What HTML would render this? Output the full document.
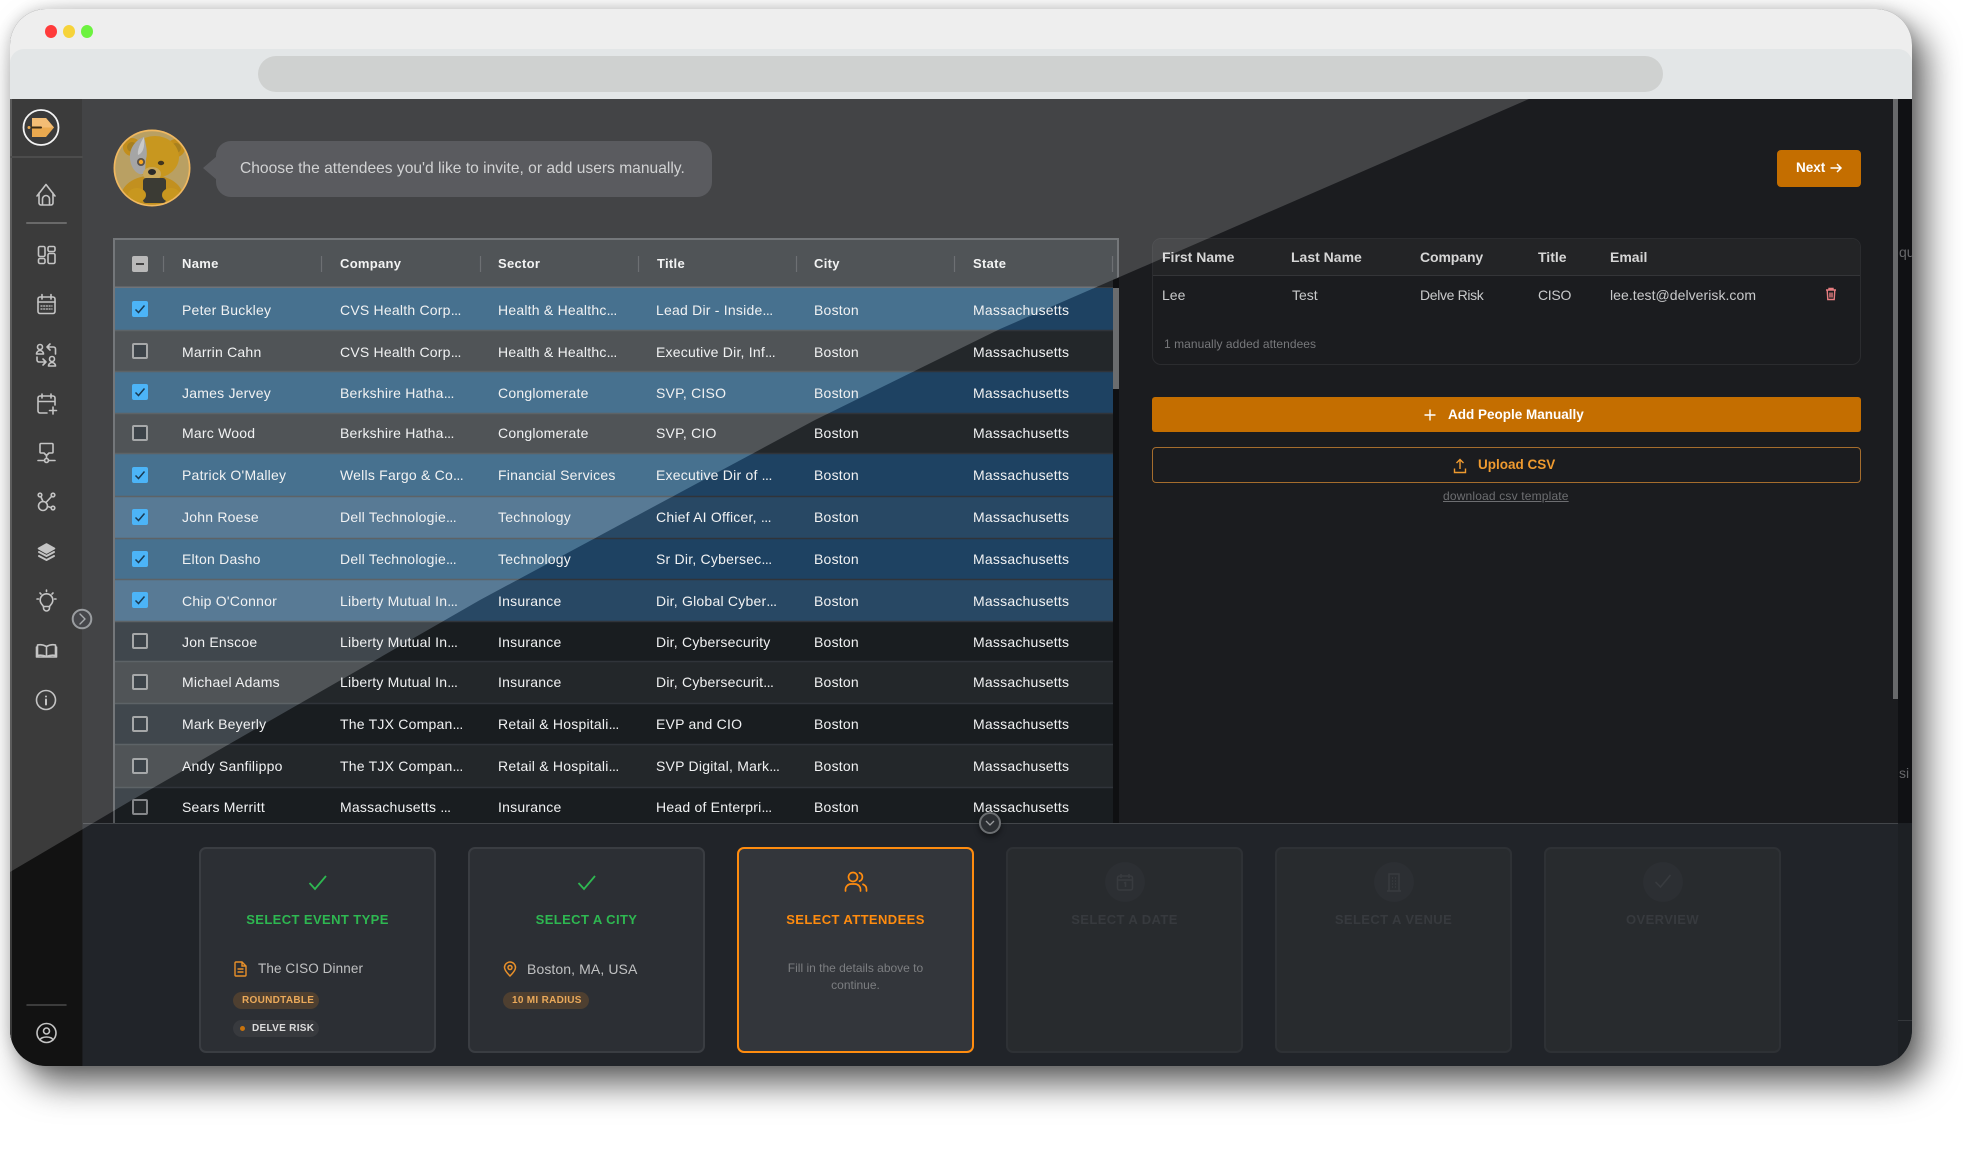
<!DOCTYPE html>
<html lang="en"><head><meta charset="utf-8"><title>Select Attendees</title>
<style>
html,body{margin:0;padding:0;background:#fff;width:1963px;height:1150px;overflow:hidden;font-family:"Liberation Sans",sans-serif}
*{box-sizing:border-box}
#win{position:absolute;left:10px;top:9px;width:1902px;height:1057px;border-radius:36px 36px 36px 36px;box-shadow:14px 18px 34px rgba(0,0,0,.62),0 0 14px rgba(0,0,0,.16)}
#clip{position:absolute;left:0;top:0;width:1902px;height:1057px;border-radius:36px;overflow:hidden;background:#1b1c1f}
#p{position:absolute;left:-10px;top:-9px;width:1963px;height:1150px}
.a{position:absolute}
svg.a{overflow:visible}
.r{position:absolute;left:115px;width:998px;color:#f1f2f3;font-size:14px;letter-spacing:.22px}
.r span{position:absolute;top:1px;white-space:nowrap}
.r b{font-weight:400;letter-spacing:-.5px}
.r .c1{left:67px}.r .c2{left:225px}.r .c3{left:383px}.r .c4{left:541px}.r .c5{left:699px}.r .c6{left:858px}
.cb{position:absolute;left:17px;width:16px;height:16px;border-radius:2px}
.cb.on{background:#4cb4f7}
.cb.off{border:2px solid #a6a8a9;background:#3c4349}
.cb svg{position:absolute;left:0;top:0}
.r.hd span{top:0}
.hd{font-weight:700;font-size:13px;letter-spacing:.3px;color:#f2f3f3}
.card{position:absolute;top:847px;height:206px;width:237px;border:2px solid #3a3d42;border-radius:7px;background:#2c2f34}
.card.dis{background:#282b2e;border-color:#2e3135}
.card.act{background:#33363b;border-color:#ff8c0f}
.t{position:absolute;left:0;width:233px;top:62px;text-align:center;font-weight:700;font-size:13px;line-height:18px;letter-spacing:.4px;white-space:nowrap}
.pill{position:absolute;height:17px;width:86px;border-radius:9px;font-size:10px;font-weight:700;line-height:17px;letter-spacing:.3px;white-space:nowrap}
.rt{position:absolute;font-size:14px;color:#c9cacb;white-space:nowrap;line-height:18px}
.rh{position:absolute;font-size:14px;font-weight:700;color:#d6d6d6;white-space:nowrap;line-height:18px}
</style></head><body>
<div id="win"><div id="clip"><div id="p">

<!-- chrome -->
<div class="a" style="left:0;top:0;width:1963px;height:70px;background:#eeeeee"></div>
<div class="a" style="left:10px;top:49px;width:1902px;height:50px;background:#e3e6e7;border-radius:14px 14px 0 0"></div>
<div class="a" style="left:258px;top:56px;width:1405px;height:36px;border-radius:18px;background:#cfd1d0"></div>
<div class="a" style="left:45px;top:25px;width:12px;height:13px;border-radius:50%;background:#ff3b3b"></div>
<div class="a" style="left:63px;top:25px;width:12px;height:13px;border-radius:50%;background:#f6d33a"></div>
<div class="a" style="left:81px;top:25px;width:12px;height:13px;border-radius:50%;background:#6cf23f"></div>

<!-- base -->
<div class="a" style="left:10px;top:99px;width:72px;height:967px;background:#121212"></div>
<div class="a" style="left:10px;top:99px;width:2px;height:967px;background:#3a3a3a"></div>
<div class="a" style="left:1898px;top:99px;width:14px;height:724px;background:#101114"></div>
<div class="a" style="left:1893px;top:99px;width:5px;height:600px;background:#68696b"></div>
<div class="a" style="left:1899px;top:244px;font-size:14px;color:#66676a;width:13px;overflow:hidden;line-height:16px">qu</div>
<div class="a" style="left:1899px;top:765px;font-size:14px;color:#66676a;width:13px;overflow:hidden;line-height:16px">si</div>

<!-- right panel card -->
<div class="a" style="left:1152px;top:238px;width:709px;height:127px;border:1px solid #2b2c2f;border-radius:9px;background:#1b1c1f;overflow:hidden">
  <div class="a" style="left:0;top:0;width:709px;height:37px;background:#232426;border-bottom:1px solid #343538"></div>
</div>
<div class="rh" style="left:1162px;top:248px">First Name</div>
<div class="rh" style="left:1291px;top:248px">Last Name</div>
<div class="rh" style="left:1420px;top:248px;letter-spacing:-.1px">Company</div>
<div class="rh" style="left:1538px;top:248px">Title</div>
<div class="rh" style="left:1610px;top:248px">Email</div>
<div class="rt" style="left:1162px;top:286px">Lee</div>
<div class="rt" style="left:1292px;top:286px">Test</div>
<div class="rt" style="left:1420px;top:286px;letter-spacing:-.35px">Delve Risk</div>
<div class="rt" style="left:1538px;top:286px;letter-spacing:-.3px">CISO</div>
<div class="rt" style="left:1610px;top:286px;letter-spacing:.05px">lee.test@delverisk.com</div>
<svg class="a" style="left:1824px;top:287px" width="14" height="14" viewBox="0 0 14 14" fill="none" stroke="#e67d80" stroke-width="1.4"><path d="M2 3h10M5 3V1.5h4V3M3.2 3l.6 9.5h6.4l.6-9.5M6 5.5v5M8 5.5v5"/></svg>
<div class="a" style="left:1164px;top:336px;font-size:12px;color:#77787b;line-height:16px;letter-spacing:.05px">1 manually added attendees</div>

<div class="a" style="left:1152px;top:397px;width:709px;height:35px;background:#c46e00;border-radius:3px;color:#fff;font-size:13.5px;font-weight:700;line-height:36px;text-align:center"><span style="position:absolute;left:296px;top:0">Add People Manually</span></div>
<svg class="a" style="left:1424px;top:409px" width="12" height="12" viewBox="0 0 12 12" stroke="#fff" stroke-width="1.4"><path d="M6 .5v11M.5 6h11"/></svg>
<div class="a" style="left:1152px;top:447px;width:709px;height:36px;border:1.5px solid #a56d2d;border-radius:4px;color:#ef9a2f;font-size:13.5px;font-weight:700;line-height:34px"><span style="position:absolute;left:325px;top:0">Upload CSV</span></div>
<svg class="a" style="left:1453px;top:458px" width="14" height="16" viewBox="0 0 14 16" fill="none" stroke="#ef9a2f" stroke-width="1.4"><path d="M7 11V2M3.5 5 7 1.5 10.500 5M1.500 10.500V14.500H12.500V10.500"/></svg>
<div class="a" style="left:1443px;top:488px;font-size:12px;color:#6d6e71;text-decoration:underline;line-height:16px;letter-spacing:.17px;white-space:nowrap">download csv template</div>

<!-- bottom panel (base) -->
<div class="a" style="left:83px;top:823px;width:1815px;height:243px;background:#212429;border-top:1px solid #43464a"></div>
<div class="a" style="left:1898px;top:823px;width:14px;height:243px;background:#1d2024"></div>
<div class="a" style="left:1898px;top:1020px;width:14px;height:1px;background:#34373b"></div>

<!-- glare -->
<svg class="a" style="left:0;top:0" width="1963" height="1150"><polygon points="10,99 1529,99 1000,329 815,420 480,600 132,800 83,829 10,872" fill="#fff" fill-opacity=".175"/></svg>

<!-- table backgrounds -->
<svg class="a" style="left:0;top:0" width="1963" height="1150">
<defs><clipPath id="g"><polygon points="0,0 1560,0 1529,99 1000,329 815,420 480,600 132,800 10,872 0,872"/></clipPath></defs>
<g>
<rect x="113" y="238" width="1006" height="585" fill="#0f1012"/>
<rect x="113" y="238" width="1006" height="2" fill="#4c4f52"/>
<rect x="113" y="238" width="2" height="585" fill="#54575a"/>
<rect x="115" y="240" width="998" height="48" fill="#26292c"/>
<rect x="115" y="287" width="998" height="1" fill="#3a3d40"/>
<rect x="115" y="288" width="998" height="42" fill="#1e4262"/>
<rect x="115" y="330" width="998" height="41" fill="#23272a"/>
<rect x="115" y="371" width="998" height="42" fill="#1e4262"/>
<rect x="115" y="413" width="998" height="40" fill="#23272a"/>
<rect x="115" y="453" width="998" height="43" fill="#1e4262"/>
<rect x="115" y="496" width="998" height="42" fill="#284864"/>
<rect x="115" y="538" width="998" height="41" fill="#1e4262"/>
<rect x="115" y="579" width="998" height="42" fill="#284864"/>
<rect x="115" y="621" width="998" height="40" fill="#191d20"/>
<rect x="115" y="661" width="998" height="42" fill="#23272a"/>
<rect x="115" y="703" width="998" height="41" fill="#191d20"/>
<rect x="115" y="744" width="998" height="43" fill="#23272a"/>
<rect x="115" y="787" width="998" height="36" fill="#191d20"/>
<path d="M115 330.500H1113M115 371.500H1113M115 413.500H1113M115 453.500H1113M115 496.500H1113M115 538.500H1113M115 579.500H1113M115 621.500H1113M115 661.500H1113M115 703.500H1113M115 744.500H1113M115 787.500H1113" stroke="#30343a" stroke-width="1.500"/>
<rect x="1113" y="288" width="6" height="101" fill="#6a6c6e"/>
</g>
<g clip-path="url(#g)">
<rect x="113" y="238" width="1006" height="2.500" fill="#74777a"/>
<rect x="113" y="238" width="2.500" height="585" fill="#74777a"/>
<rect x="1116.500" y="238" width="2.500" height="50" fill="#74777a"/>
<rect x="115" y="240" width="1002" height="48" fill="#505457"/>
<rect x="115" y="286.500" width="1002" height="2" fill="#70747a"/>
<rect x="115" y="288" width="998" height="42" fill="#47718f"/>
<rect x="115" y="330" width="998" height="41" fill="#505457"/>
<rect x="115" y="371" width="998" height="42" fill="#47718f"/>
<rect x="115" y="413" width="998" height="40" fill="#505457"/>
<rect x="115" y="453" width="998" height="43" fill="#47718f"/>
<rect x="115" y="496" width="998" height="42" fill="#587a95"/>
<rect x="115" y="538" width="998" height="41" fill="#47718f"/>
<rect x="115" y="579" width="998" height="42" fill="#587a95"/>
<rect x="115" y="621" width="998" height="40" fill="#40474d"/>
<rect x="115" y="661" width="998" height="42" fill="#505457"/>
<rect x="115" y="703" width="998" height="41" fill="#40474d"/>
<rect x="115" y="744" width="998" height="43" fill="#505457"/>
<rect x="115" y="787" width="998" height="36" fill="#40474d"/>
<path d="M115 330.500H1113M115 371.500H1113M115 413.500H1113M115 453.500H1113M115 496.500H1113M115 538.500H1113M115 579.500H1113M115 621.500H1113M115 661.500H1113M115 703.500H1113M115 744.500H1113M115 787.500H1113" stroke="#5d6367" stroke-width="1.500"/>
</g>
<path d="M163.500 256V272M321.500 256V272M480.500 256V272M638.500 256V272M796.500 256V272M954.500 256V272M1112.500 256V272" stroke="#6d7073" stroke-width="1.200"/>
</svg>

<!-- table text -->
<div class="r hd" style="top:240px;height:48px;line-height:48px">
<i class="cb" style="top:16px;background:#b9b9b9"><svg width="16" height="16"><path d="M4 8h8" stroke="#444" stroke-width="2"/></svg></i>
<span class="c1">Name</span><span class="c2">Company</span><span class="c3">Sector</span><span class="c4" style="left:542px">Title</span><span class="c5">City</span><span class="c6">State</span></div>

<div class="r" style="top:288px;height:42px;line-height:42px"><i class="cb on" style="top:13px"><svg width="16" height="16" fill="none" stroke="#1a3a52" stroke-width="1.500"><path d="M3.500 8.500 6.500 11.500 12.500 4.500"/></svg></i><span class="c1">Peter Buckley</span><span class="c2">CVS Health Corp<b>...</b></span><span class="c3">Health &amp; Healthc<b>...</b></span><span class="c4">Lead Dir - Inside<b>...</b></span><span class="c5">Boston</span><span class="c6">Massachusetts</span></div>
<div class="r" style="top:330px;height:41px;line-height:43px"><i class="cb off" style="top:13px"></i><span class="c1">Marrin Cahn</span><span class="c2">CVS Health Corp<b>...</b></span><span class="c3">Health &amp; Healthc<b>...</b></span><span class="c4">Executive Dir, Inf<b>...</b></span><span class="c5">Boston</span><span class="c6">Massachusetts</span></div>
<div class="r" style="top:371px;height:42px;line-height:42px"><i class="cb on" style="top:13px"><svg width="16" height="16" fill="none" stroke="#1a3a52" stroke-width="1.500"><path d="M3.500 8.500 6.500 11.500 12.500 4.500"/></svg></i><span class="c1">James Jervey</span><span class="c2">Berkshire Hatha<b>...</b></span><span class="c3">Conglomerate</span><span class="c4">SVP, CISO</span><span class="c5">Boston</span><span class="c6">Massachusetts</span></div>
<div class="r" style="top:413px;height:40px;line-height:38px"><i class="cb off" style="top:12px"></i><span class="c1">Marc Wood</span><span class="c2">Berkshire Hatha<b>...</b></span><span class="c3">Conglomerate</span><span class="c4">SVP, CIO</span><span class="c5">Boston</span><span class="c6">Massachusetts</span></div>
<div class="r" style="top:453px;height:43px;line-height:43px"><i class="cb on" style="top:14px"><svg width="16" height="16" fill="none" stroke="#1a3a52" stroke-width="1.500"><path d="M3.500 8.500 6.500 11.500 12.500 4.500"/></svg></i><span class="c1">Patrick O'Malley</span><span class="c2">Wells Fargo &amp; Co<b>...</b></span><span class="c3">Financial Services</span><span class="c4">Executive Dir of <b>...</b></span><span class="c5">Boston</span><span class="c6">Massachusetts</span></div>
<div class="r" style="top:496px;height:42px;line-height:40px"><i class="cb on" style="top:13px"><svg width="16" height="16" fill="none" stroke="#1a3a52" stroke-width="1.500"><path d="M3.500 8.500 6.500 11.500 12.500 4.500"/></svg></i><span class="c1">John Roese</span><span class="c2">Dell Technologie<b>...</b></span><span class="c3">Technology</span><span class="c4">Chief AI Officer, <b>...</b></span><span class="c5">Boston</span><span class="c6">Massachusetts</span></div>
<div class="r" style="top:538px;height:41px;line-height:41px"><i class="cb on" style="top:13px"><svg width="16" height="16" fill="none" stroke="#1a3a52" stroke-width="1.500"><path d="M3.500 8.500 6.500 11.500 12.500 4.500"/></svg></i><span class="c1">Elton Dasho</span><span class="c2">Dell Technologie<b>...</b></span><span class="c3">Technology</span><span class="c4">Sr Dir, Cybersec<b>...</b></span><span class="c5">Boston</span><span class="c6">Massachusetts</span></div>
<div class="r" style="top:579px;height:42px;line-height:42px"><i class="cb on" style="top:13px"><svg width="16" height="16" fill="none" stroke="#1a3a52" stroke-width="1.500"><path d="M3.500 8.500 6.500 11.500 12.500 4.500"/></svg></i><span class="c1">Chip O'Connor</span><span class="c2">Liberty Mutual In<b>...</b></span><span class="c3">Insurance</span><span class="c4">Dir, Global Cyber<b>...</b></span><span class="c5">Boston</span><span class="c6">Massachusetts</span></div>
<div class="r" style="top:621px;height:40px;line-height:40px"><i class="cb off" style="top:12px"></i><span class="c1">Jon Enscoe</span><span class="c2">Liberty Mutual In<b>...</b></span><span class="c3">Insurance</span><span class="c4">Dir, Cybersecurity</span><span class="c5">Boston</span><span class="c6">Massachusetts</span></div>
<div class="r" style="top:661px;height:42px;line-height:40px"><i class="cb off" style="top:13px"></i><span class="c1">Michael Adams</span><span class="c2">Liberty Mutual In<b>...</b></span><span class="c3">Insurance</span><span class="c4">Dir, Cybersecurit<b>...</b></span><span class="c5">Boston</span><span class="c6">Massachusetts</span></div>
<div class="r" style="top:703px;height:41px;line-height:41px"><i class="cb off" style="top:13px"></i><span class="c1">Mark Beyerly</span><span class="c2">The TJX Compan<b>...</b></span><span class="c3">Retail &amp; Hospitali<b>...</b></span><span class="c4">EVP and CIO</span><span class="c5">Boston</span><span class="c6">Massachusetts</span></div>
<div class="r" style="top:744px;height:43px;line-height:43px"><i class="cb off" style="top:14px"></i><span class="c1">Andy Sanfilippo</span><span class="c2">The TJX Compan<b>...</b></span><span class="c3">Retail &amp; Hospitali<b>...</b></span><span class="c4">SVP Digital, Mark<b>...</b></span><span class="c5">Boston</span><span class="c6">Massachusetts</span></div>
<div class="r" style="top:787px;height:36px;line-height:38px;overflow:hidden"><i class="cb off" style="top:12px;background:#24282b;border-color:#85878a"></i><span class="c1">Sears Merritt</span><span class="c2">Massachusetts <b>...</b></span><span class="c3">Insurance</span><span class="c4">Head of Enterpri<b>...</b></span><span class="c5">Boston</span><span class="c6">Massachusetts</span></div>

<!-- header: avatar + bubble -->
<svg class="a" style="left:113px;top:129px" width="78" height="78" viewBox="0 0 78 78">
<defs><clipPath id="av"><circle cx="39" cy="39" r="36.800"/></clipPath></defs>
<circle cx="39" cy="39" r="38.500" fill="#f0b860"/>
<g clip-path="url(#av)">
<rect width="78" height="78" fill="#b9a063"/>
<path d="M6 78 C6 58 16 48 40 46 C62 48 72 58 72 78Z" fill="#c2901f"/>
<circle cx="19" cy="18" r="9" fill="#c28e1c"/><circle cx="19" cy="18" r="5" fill="#a8801f"/>
<circle cx="63" cy="19" r="9" fill="#c28e1c"/><circle cx="63" cy="19" r="5" fill="#a8801f"/>
<ellipse cx="42" cy="28" rx="24" ry="21" fill="#c8971f"/>
<path d="M31 8 C22 11 16 20 17 30 C18 39 24 47 31 45 C33 43 32 36 33 30 C35 24 33 16 31 8Z" fill="#a5a5a5"/>
<path d="M31 8 C27 14 24 22 25 26 C30 24 32 18 31 8Z" fill="#c9c9c9"/>
<circle cx="28" cy="33" r="4" fill="#5a5148"/><circle cx="28" cy="33" r="2.200" fill="#f5a623"/>
<ellipse cx="48" cy="34" rx="3.200" ry="2.200" fill="#40351f"/>
<ellipse cx="39" cy="45" rx="9" ry="7" fill="#c9a85a"/><ellipse cx="39" cy="43" rx="4" ry="3" fill="#2a2a2a"/>
<rect x="30" y="49" width="23" height="25" rx="3" fill="#3b3b34"/>
<ellipse cx="24" cy="66" rx="9" ry="7" fill="#c8971f"/><ellipse cx="58" cy="66" rx="9" ry="7" fill="#c8971f"/>
</g>
</svg>
<svg class="a" style="left:203px;top:141px" width="509" height="56"><path d="M0 27 14 15V39Z" fill="#5a5b5f"/><rect x="13" y="0" width="496" height="56" rx="15" fill="#5a5b5f"/></svg>
<div class="a" style="left:240px;top:159px;font-size:15.6px;line-height:20px;color:#d1d2d3;white-space:nowrap">Choose the attendees you'd like to invite, or add users manually.</div>

<div class="a" style="left:1777px;top:150px;width:84px;height:37px;background:#c46e00;border-radius:4px"></div>
<div class="a" style="left:1796px;top:159px;color:#fff;font-size:13.5px;font-weight:700;line-height:18px;white-space:nowrap">Next</div>
<svg class="a" style="left:1830px;top:163px" width="12" height="10" fill="none" stroke="#fff" stroke-width="1.500"><path d="M.5 5H11M7 1 11 5 7 9"/></svg>

<!-- sidebar icons -->
<svg class="a" style="left:0;top:0" width="120" height="1150" fill="none" stroke="#c4c4c4" stroke-width="1.600" stroke-linecap="round" stroke-linejoin="round">
<!-- logo -->
<circle cx="41" cy="127.500" r="17.500" stroke="#f4f4f4" stroke-width="1.800"/>
<path d="M32 118H46L54 127.500 46 137H32Z" fill="#eaa94f" stroke="none"/>
<path d="M32 118H46L54 127.500 H32Z" fill="#f3bd75" stroke="none"/>
<path d="M29 127.500H41" stroke="#3a2a14" stroke-width="2"/><circle cx="29" cy="127.500" r="1.500" fill="#eaa94f" stroke="none"/>
<path d="M11 157H82" stroke="#4c4c4c" stroke-width="2"/>
<!-- home -->
<path d="M37 196 46 184.500 55 196M39 193V203A2 2 0 0 0 41 205H51A2 2 0 0 0 53 203V193M42.500 204.500V199A3.500 3.500 0 0 1 49.500 199V204.500"/>
<path d="M27 223H66" stroke="#696969" stroke-width="2"/>
<!-- dashboard -->
<rect x="38.500" y="246.500" width="6.500" height="10" rx="1.500"/><rect x="48" y="246.500" width="7" height="5" rx="1.500"/><rect x="38.500" y="258.500" width="6.500" height="5" rx="1.500"/><rect x="48" y="253.500" width="7" height="10" rx="1.500"/>
<!-- calendar -->
<rect x="38" y="297" width="17" height="16.500" rx="2"/><path d="M42 294.500V299M51 294.500V299M38 302H55"/><path d="M41 306H52M41 309H52" stroke-dasharray="1 1.700" stroke-width="1.300"/>
<!-- swap -->
<circle cx="40" cy="347" r="2.500"/><path d="M36.500 354A3.500 3.500 0 0 1 43.500 354Z"/><path d="M55.500 354V349A2 2 0 0 0 53.500 347H47M50 344 47 347 50 350"/>
<path d="M37 357V360A2 2 0 0 0 39 362H46M43 359 46 362 43 365"/><circle cx="52" cy="359" r="2.500"/><path d="M48.500 366A3.500 3.500 0 0 1 55.500 366Z"/>
<!-- calendar plus -->
<path d="M47 413H40A2 2 0 0 1 38 411V398A2 2 0 0 1 40 396H53A2 2 0 0 1 55 398V405M42 394V398M51 394V398M38 401.500H55M53 407V414M49.500 410.500H56.500"/>
<!-- network -->
<path d="M41 443.500H52A1 1 0 0 1 53 444.500V452A1 1 0 0 1 52 453H49L46.500 455.500 44 453H41A1 1 0 0 1 40 452V444.500A1 1 0 0 1 41 443.500ZM46.500 455.500V458M38 460.500H44.500M48.500 460.500H55"/><circle cx="46.500" cy="460.500" r="2"/>
<!-- graph -->
<circle cx="43" cy="506" r="4.500"/><circle cx="40" cy="495" r="1.800"/><circle cx="53" cy="495" r="1.800"/><circle cx="53" cy="508" r="1.800"/><path d="M41 497 43 501.500M51.500 496.500 46 502.500M47.500 506.500 51 507.500"/>
<!-- layers -->
<path d="M46.500 544 54.500 548.500 46.500 553 38.500 548.500Z" fill="#c4c4c4"/><path d="M39 552 46.500 556 54 552M39 556 46.500 560 54 556" stroke-width="2"/>
<!-- bulb -->
<path d="M42 604.500A6.300 6.300 0 1 1 51 604.500L49.500 606.500H43.500ZM43.500 606.500V608A3 3 0 0 0 49.500 608V606.500"/><path d="M46.500 590V591.500M37 599H38.500M54.500 599H56M40 593 41 594M53 593 52 594"/>
<!-- book -->
<path d="M46.500 646.500C43 644.500 39.500 644.500 37.500 645V655.500C40 655 43 655 46.500 656.500 50 655 53 655 55.500 655.500V645C53.500 644.500 50 644.500 46.500 646.500ZM46.500 646.500V656M36.500 647V657H56.500V647"/>
<!-- info -->
<circle cx="46" cy="700" r="9.500"/><path d="M46 699.500V704.500" stroke-width="2"/><circle cx="46" cy="696.500" r="1" fill="#c4c4c4" stroke="none"/>
<!-- expand -->
<circle cx="82" cy="619" r="9.300" fill="#46474b" stroke="#9a9da0" stroke-width="2"/><path d="M80 614 85 619 80 624" stroke="#a8abad" stroke-width="1.400"/>
<!-- bottom -->
<path d="M27 1005H66" stroke="#4a4a4a" stroke-width="1.500"/>
<circle cx="46.500" cy="1033" r="9.500"/><circle cx="46.500" cy="1031" r="3"/><path d="M40 1040C41 1036 52 1036 53 1040"/>
</svg>

<!-- bottom cards -->
<div class="a" style="left:979px;top:812px;width:22px;height:22px;border-radius:50%;background:#2b2e32;border:2px solid #6c6f72;box-shadow:0 3px 6px rgba(0,0,0,.45)"></div>
<svg class="a" style="left:985px;top:820px" width="10" height="7" fill="none" stroke="#9a9c9f" stroke-width="1.300"><path d="M1 1 5 5 9 1"/></svg>

<div class="card" style="left:199px">
<svg class="a" style="left:107px;top:26px" width="20" height="16" fill="none" stroke="#2eb851" stroke-width="1.800"><path d="M1.500 8 7 14 18 1"/></svg>
<div class="t" style="color:#2eb851">SELECT EVENT TYPE</div>
<svg class="a" style="left:33px;top:112px" width="13" height="16" fill="none" stroke="#e8902a" stroke-width="1.400"><path d="M1 2A1 1 0 0 1 2 1H8L12 5V14A1 1 0 0 1 11 15H2A1 1 0 0 1 1 14ZM8 1V5H12M3.500 8H9.500M3.500 11H9.500"/></svg>
<div class="rt" style="left:57px;top:111px;color:#c0c1c2;font-size:13.5px;letter-spacing:.1px">The CISO Dinner</div>
<div class="pill" style="left:32px;top:143px;background:#4e3f30;color:#eaa95a;padding-left:9px">ROUNDTABLE</div>
<div class="pill" style="left:32px;top:171px;background:#383a3e;color:#dcdcdc;padding-left:19px">DELVE RISK<i class="a" style="left:7px;top:6px;width:5px;height:5px;border-radius:50%;background:#c8730d"></i></div>
</div>

<div class="card" style="left:468px">
<svg class="a" style="left:107px;top:26px" width="20" height="16" fill="none" stroke="#2eb851" stroke-width="1.800"><path d="M1.500 8 7 14 18 1"/></svg>
<div class="t" style="color:#2eb851">SELECT A CITY</div>
<svg class="a" style="left:33px;top:112px" width="14" height="16" fill="none" stroke="#e8902a" stroke-width="1.500"><path d="M7 15C3 11 1.500 8.500 1.500 6.500A5.500 5.500 0 0 1 12.500 6.500C12.500 8.500 11 11 7 15Z"/><circle cx="7" cy="6.500" r="2"/></svg>
<div class="rt" style="left:57px;top:111px;color:#c0c1c2;letter-spacing:.1px">Boston, MA, USA</div>
<div class="pill" style="left:33px;top:143px;background:#4e3f30;color:#eaa95a;padding-left:9px">10 MI RADIUS</div>
</div>

<div class="card act" style="left:737px">
<svg class="a" style="left:105px;top:22px" width="24" height="22" viewBox="0 0 24 22" fill="none" stroke="#ff8c0f" stroke-width="1.700" stroke-linecap="round"><circle cx="9" cy="6" r="4.500"/><path d="M1.500 20V18.500A5.500 5.500 0 0 1 7 13H11A5.500 5.500 0 0 1 16.500 18.500V20M15.500 1.800A4.500 4.500 0 0 1 15.500 10.200M19 13.300A5.500 5.500 0 0 1 22.500 18.500V20"/></svg>
<div class="t" style="color:#ff8c0f">SELECT ATTENDEES</div>
<div class="a" style="left:32px;width:169px;top:111px;text-align:center;font-size:12px;line-height:16.500px;color:#7c7e81">Fill in the details above to continue.</div>
</div>

<div class="card dis" style="left:1006px">
<i class="a" style="left:97px;top:13px;width:40px;height:40px;border-radius:50%;background:#2c2f33"></i>
<svg class="a" style="left:108px;top:24px" width="18" height="18" fill="none" stroke="#383b3f" stroke-width="1.500"><rect x="1.500" y="3" width="15" height="14" rx="2"/><path d="M5 1V5M13 1V5M1.500 7H16.500M8 10 9.500 9.500V14"/></svg>
<div class="t" style="color:#373a3e">SELECT A DATE</div></div>

<div class="card dis" style="left:1275px">
<i class="a" style="left:97px;top:13px;width:40px;height:40px;border-radius:50%;background:#2c2f33"></i>
<svg class="a" style="left:109px;top:23px" width="16" height="20" fill="none" stroke="#383b3f" stroke-width="1.500"><path d="M3 19V2H13V19M1 19H15M6 6H7M9 6H10M6 9H7M9 9H10M6 12H7M9 12H10M6 15H7M9 15H10"/></svg>
<div class="t" style="color:#373a3e">SELECT A VENUE</div></div>

<div class="card dis" style="left:1544px">
<i class="a" style="left:97px;top:13px;width:40px;height:40px;border-radius:50%;background:#2c2f33"></i>
<svg class="a" style="left:108px;top:25px" width="18" height="15" fill="none" stroke="#383b3f" stroke-width="1.600"><path d="M1.500 8 6.500 13 16.500 1"/></svg>
<div class="t" style="color:#373a3e">OVERVIEW</div></div>

</div></div></div>
</body></html>
